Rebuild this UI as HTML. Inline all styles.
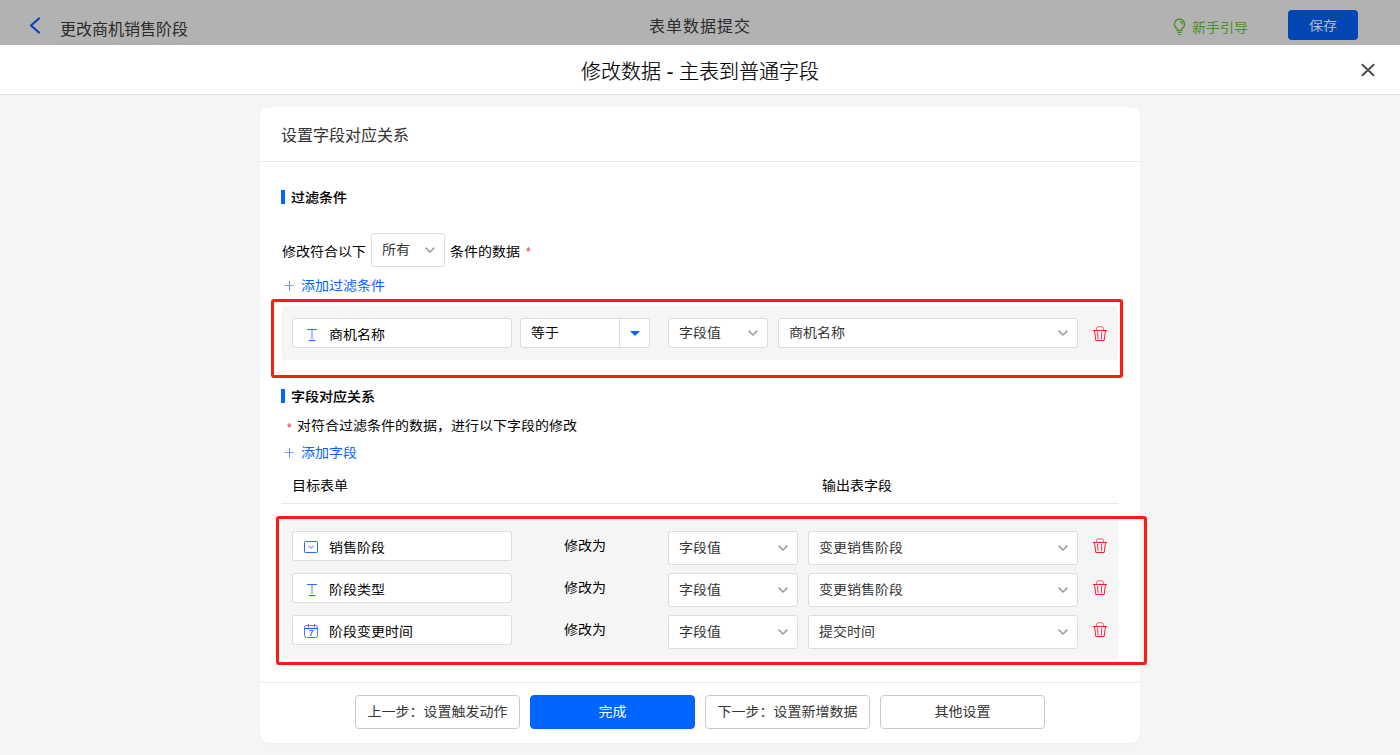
<!DOCTYPE html>
<html lang="zh-CN">
<head>
<meta charset="utf-8">
<title>修改数据 - 主表到普通字段</title>
<style>
*{box-sizing:border-box;margin:0;padding:0}
html,body{width:1400px;height:755px;overflow:hidden}
body{position:relative;background:#f5f5f5;font-family:"Liberation Sans","Noto Sans CJK SC",sans-serif;font-size:14px;color:#1f1f1f;line-height:20px}
.a{position:absolute;white-space:nowrap}
svg{position:absolute;display:block;overflow:visible}

/* top application bar (dimmed by modal mask) */
#topbar{left:0;top:0;width:1400px;height:45px;background:#b2b2b2}
#back{left:28.7px;top:17px;width:12px;height:17px}
#appname{left:60px;top:19px;font-size:16px;line-height:22px;color:#2a2a2a}
#appname-line{left:58px;top:43px;width:136px;height:0;border-top:1px dashed #a3a3a3}
#toptitle{left:649px;top:15px;font-size:16px;letter-spacing:1px;line-height:24px;color:#2c2c2c}
#guide-ico{left:1173px;top:18px;width:13px;height:18px}
#guide{left:1192px;top:17px;font-size:14px;line-height:20px;color:#45911a;transform:scaleY(.9)}
#save{left:1288px;top:10px;width:70px;height:30px;border-radius:4px;background:#0247b3;color:#bcbcbc;text-align:center;font-size:14px;line-height:30px}

/* dialog header */
#dlghead{left:0;top:45px;width:1400px;height:50px;background:#fff;border-bottom:1px solid #e0e0e0}
#dlgtitle{left:0;top:58px;width:1400px;text-align:center;font-size:20px;line-height:28px;color:#000;font-weight:300;-webkit-text-stroke:.2px #000}
#close{left:1360.5px;top:63px;width:14px;height:14px}

/* card */
#card{left:260px;top:107px;width:880px;height:636px;background:#fff;border-radius:9px;box-shadow:0 1px 3px rgba(0,0,0,.04)}
#cardtitle{left:281px;top:125px;font-size:16px;line-height:22px;color:#333}
.hr{height:1px;background:#e9e9e9}
.bar{width:4px;height:14px;background:#0265ff}
.sec{font-weight:500;font-size:14px;line-height:20px;color:#000;transform:scaleY(.91);-webkit-text-stroke:.12px #000}
.t{font-size:14px;line-height:20px;color:#000;transform:scaleY(.9);transform-origin:50% 40%}
.s{color:#333}
.blue{color:#0265ff}
.q{display:inline-block;transform:scaleY(.9)}
.red{color:#f5222d}
.grey{background:#f5f5f5;border-radius:3px}
.box{background:#fff;border:1px solid #dcdcdc;border-radius:3px}
.redbox{border:3px solid #fe1c10;border-radius:3px}
.btn{top:695px;width:165px;height:34px;border:1px solid #c9c9c9;border-radius:4px;background:#fff;text-align:center;font-size:14px;line-height:32px;color:#333}
.btn.primary{background:#0265ff;border-color:#0265ff;color:#fff}
</style>
</head>
<body>

<!-- top bar -->
<div class="a" id="topbar"></div>
<svg id="back" viewBox="0 0 12 17"><polyline points="10,1.5 2,8.5 10,15.5" fill="none" stroke="#0b41c2" stroke-width="2.3" stroke-linecap="round" stroke-linejoin="round"/></svg>
<div class="a" id="appname">更改商机销售阶段</div>
<div class="a" id="appname-line"></div>
<div class="a" id="toptitle">表单数据提交</div>
<svg id="guide-ico" viewBox="0 0 13 18"><path d="M6.5 1.2a5 5 0 0 0-3 9c.6.5.9 1.1.9 1.8v.5h4.2v-.5c0-.7.3-1.3.9-1.8a5 5 0 0 0-3-9z" fill="none" stroke="#45911a" stroke-width="1.3"/><path d="M4.4 14.5h4.2M5 16.5h3" fill="none" stroke="#45911a" stroke-width="1.2"/><path d="M7 3.4a3 3 0 0 1 2.5 2.9" fill="none" stroke="#45911a" stroke-width="1.1"/></svg>
<div class="a" id="guide">新手引导</div>
<div class="a" id="save"><span class="q">保存</span></div>

<!-- dialog header -->
<div class="a" id="dlghead"></div>
<div class="a" id="dlgtitle">修改数据 - 主表到普通字段</div>
<svg id="close" viewBox="0 0 14 14"><path d="M.9 1.3l12.2 11.4M13.1 1.3L.9 12.7" fill="none" stroke="#4a4a4a" stroke-width="1.9"/></svg>

<!-- card -->
<div class="a" id="card"></div>
<div class="a" id="cardtitle">设置字段对应关系</div>
<div class="a hr" style="left:260px;top:161px;width:880px"></div>

<!-- section 1: filter -->
<div class="a bar" style="left:281px;top:190px"></div>
<div class="a sec" style="left:291px;top:187px">过滤条件</div>
<div class="a t" style="left:282px;top:242px">修改符合以下</div>
<div class="a box" style="left:371px;top:233px;width:74px;height:34px"></div>
<div class="a t s" style="left:382px;top:240px">所有</div>
<svg style="left:425px;top:247px;width:10px;height:6px" viewBox="0 0 10 6"><polyline points="0.6,0.6 5,5 9.4,0.6" fill="none" stroke="#959ba6" stroke-width="1.5"/></svg>
<div class="a t" style="left:450px;top:242px">条件的数据</div>
<div class="a red" style="left:526px;top:242px;font-size:12px">*</div>
<svg style="left:284px;top:281px;width:10px;height:10px" viewBox="0 0 10 10"><path d="M5.5 0v9.5" fill="none" stroke="#3a6dff" stroke-width="1" stroke-opacity=".8"/><path d="M0 4.5h10" fill="none" stroke="#3a6dff" stroke-width="1" stroke-opacity=".6"/></svg>
<div class="a t blue" style="left:301px;top:276px">添加过滤条件</div>

<div class="a grey" style="left:282px;top:306px;width:836px;height:54px"></div>
<div class="a box" style="left:292px;top:318px;width:220px;height:30px"></div>
<svg style="left:307px;top:329px;width:10px;height:12px" viewBox="0 0 10 12"><path d="M0 .5h10" fill="none" stroke="#2f6bff" stroke-width="1"/><path d="M5 1v9" fill="none" stroke="#6a7dff" stroke-width="2" stroke-opacity=".55"/><path d="M2 11.5h6.3" fill="none" stroke="#0265ff" stroke-width="1"/></svg>
<div class="a t" style="left:329px;top:325px">商机名称</div>
<div class="a box" style="left:520px;top:318px;width:130px;height:30px;border-radius:2px"></div>
<div class="a" style="left:619px;top:319px;width:1px;height:28px;background:#dcdcdc"></div>
<div class="a t" style="left:531px;top:323px">等于</div>
<svg style="left:630px;top:331px;width:10px;height:5px" viewBox="0 0 10 5"><path d="M0 0h10L5 5z" fill="#0265ff"/></svg>
<div class="a box" style="left:668px;top:318px;width:100px;height:30px"></div>
<div class="a t s" style="left:679px;top:323px">字段值</div>
<svg style="left:748px;top:330px;width:10px;height:6px" viewBox="0 0 10 6"><polyline points="0.6,0.6 5,5 9.4,0.6" fill="none" stroke="#959ba6" stroke-width="1.5"/></svg>
<div class="a box" style="left:778px;top:318px;width:300px;height:30px"></div>
<div class="a t s" style="left:789px;top:323px">商机名称</div>
<svg style="left:1058px;top:330px;width:10px;height:6px" viewBox="0 0 10 6"><polyline points="0.6,0.6 5,5 9.4,0.6" fill="none" stroke="#959ba6" stroke-width="1.5"/></svg>
<svg style="left:1093px;top:326px;width:14px;height:15px" viewBox="0 0 14 15"><path d="M0 4.5h14" fill="none" stroke="#fa1e2d" stroke-width="1.1"/><path d="M3.6 4.3V2.3a1.5 1.5 0 0 1 1.5-1.5h3.8a1.5 1.5 0 0 1 1.5 1.5v2" fill="none" stroke="#fa3b47" stroke-width="1" stroke-opacity=".8"/><path d="M1.6 5l1.2 9.5h8.4l1.2-9.5" fill="none" stroke="#fa1e2d" stroke-width="1" stroke-linejoin="round"/><path d="M4.6 6.3l.4 6.4M8.7 6.3l-.3 6.4" fill="none" stroke="#fa1e2d" stroke-width="1" stroke-linecap="round" stroke-opacity=".9"/></svg>
<div class="a redbox" style="left:271px;top:299px;width:852px;height:79px"></div>


<!-- section 2: field mapping -->
<div class="a bar" style="left:281px;top:389px"></div>
<div class="a sec" style="left:291px;top:386px">字段对应关系</div>
<div class="a red" style="left:287px;top:418px;font-size:12px">*</div>
<div class="a t" style="left:297px;top:416px">对符合过滤条件的数据，进行以下字段的修改</div>
<svg style="left:284px;top:448px;width:10px;height:10px" viewBox="0 0 10 10"><path d="M5.5 0v9.5" fill="none" stroke="#3a6dff" stroke-width="1" stroke-opacity=".8"/><path d="M0 4.5h10" fill="none" stroke="#3a6dff" stroke-width="1" stroke-opacity=".6"/></svg>
<div class="a t blue" style="left:301px;top:443px">添加字段</div>
<div class="a t" style="left:292px;top:476px">目标表单</div>
<div class="a t" style="left:822px;top:476px">输出表字段</div>
<div class="a hr" style="left:282px;top:503px;width:836px"></div>
<div class="a grey" style="left:282px;top:519px;width:836px;height:140px"></div>
<div class="a box" style="left:292px;top:531px;width:220px;height:30px"></div>
<svg style="left:304px;top:541px;width:14px;height:12px" viewBox="0 0 14 12"><rect x=".5" y=".5" width="13" height="11" rx=".8" fill="none" stroke="#2a68ff" stroke-width="1"/><polyline points="4.2,4.8 7,7.3 9.8,4.8" fill="none" stroke="#3d6dff" stroke-width="1"/></svg>
<div class="a t" style="left:329px;top:538px">销售阶段</div>
<div class="a t" style="left:564px;top:536px">修改为</div>
<div class="a box" style="left:668px;top:531px;width:130px;height:34px"></div>
<div class="a t s" style="left:679px;top:538px">字段值</div>
<svg style="left:778px;top:545px;width:10px;height:6px" viewBox="0 0 10 6"><polyline points="0.6,0.6 5,5 9.4,0.6" fill="none" stroke="#959ba6" stroke-width="1.5"/></svg>
<div class="a box" style="left:808px;top:531px;width:270px;height:34px"></div>
<div class="a t s" style="left:819px;top:538px">变更销售阶段</div>
<svg style="left:1058px;top:545px;width:10px;height:6px" viewBox="0 0 10 6"><polyline points="0.6,0.6 5,5 9.4,0.6" fill="none" stroke="#959ba6" stroke-width="1.5"/></svg>
<svg style="left:1093px;top:538px;width:14px;height:15px" viewBox="0 0 14 15"><path d="M0 4.5h14" fill="none" stroke="#fa1e2d" stroke-width="1.1"/><path d="M3.6 4.3V2.3a1.5 1.5 0 0 1 1.5-1.5h3.8a1.5 1.5 0 0 1 1.5 1.5v2" fill="none" stroke="#fa3b47" stroke-width="1" stroke-opacity=".8"/><path d="M1.6 5l1.2 9.5h8.4l1.2-9.5" fill="none" stroke="#fa1e2d" stroke-width="1" stroke-linejoin="round"/><path d="M4.6 6.3l.4 6.4M8.7 6.3l-.3 6.4" fill="none" stroke="#fa1e2d" stroke-width="1" stroke-linecap="round" stroke-opacity=".9"/></svg>
<div class="a box" style="left:292px;top:573px;width:220px;height:30px"></div>
<svg style="left:307px;top:584px;width:10px;height:12px" viewBox="0 0 10 12"><path d="M0 .5h10" fill="none" stroke="#2f6bff" stroke-width="1"/><path d="M5 1v9" fill="none" stroke="#6a7dff" stroke-width="2" stroke-opacity=".55"/><path d="M2 11.5h6.3" fill="none" stroke="#0265ff" stroke-width="1"/></svg>
<div class="a t" style="left:329px;top:580px">阶段类型</div>
<div class="a t" style="left:564px;top:578px">修改为</div>
<div class="a box" style="left:668px;top:573px;width:130px;height:34px"></div>
<div class="a t s" style="left:679px;top:580px">字段值</div>
<svg style="left:778px;top:587px;width:10px;height:6px" viewBox="0 0 10 6"><polyline points="0.6,0.6 5,5 9.4,0.6" fill="none" stroke="#959ba6" stroke-width="1.5"/></svg>
<div class="a box" style="left:808px;top:573px;width:270px;height:34px"></div>
<div class="a t s" style="left:819px;top:580px">变更销售阶段</div>
<svg style="left:1058px;top:587px;width:10px;height:6px" viewBox="0 0 10 6"><polyline points="0.6,0.6 5,5 9.4,0.6" fill="none" stroke="#959ba6" stroke-width="1.5"/></svg>
<svg style="left:1093px;top:580px;width:14px;height:15px" viewBox="0 0 14 15"><path d="M0 4.5h14" fill="none" stroke="#fa1e2d" stroke-width="1.1"/><path d="M3.6 4.3V2.3a1.5 1.5 0 0 1 1.5-1.5h3.8a1.5 1.5 0 0 1 1.5 1.5v2" fill="none" stroke="#fa3b47" stroke-width="1" stroke-opacity=".8"/><path d="M1.6 5l1.2 9.5h8.4l1.2-9.5" fill="none" stroke="#fa1e2d" stroke-width="1" stroke-linejoin="round"/><path d="M4.6 6.3l.4 6.4M8.7 6.3l-.3 6.4" fill="none" stroke="#fa1e2d" stroke-width="1" stroke-linecap="round" stroke-opacity=".9"/></svg>
<div class="a box" style="left:292px;top:615px;width:220px;height:30px"></div>
<svg style="left:304px;top:624px;width:14px;height:14px" viewBox="0 0 14 14"><rect x=".5" y="1.5" width="13" height="12" rx="2" fill="none" stroke="#4a78ff" stroke-width="1"/><path d="M.5 4.5h13" fill="none" stroke="#0f62ff" stroke-width="1.2"/><path d="M4.5 0v3.5M10.5 0v3.5" fill="none" stroke="#4a78ff" stroke-width="1"/><text x="7.2" y="12" text-anchor="middle" font-family="Liberation Sans, sans-serif" font-size="8.5" fill="#0f62ff" stroke="#0f62ff" stroke-width=".2">7</text></svg>
<div class="a t" style="left:329px;top:622px">阶段变更时间</div>
<div class="a t" style="left:564px;top:620px">修改为</div>
<div class="a box" style="left:668px;top:615px;width:130px;height:34px"></div>
<div class="a t s" style="left:679px;top:622px">字段值</div>
<svg style="left:778px;top:629px;width:10px;height:6px" viewBox="0 0 10 6"><polyline points="0.6,0.6 5,5 9.4,0.6" fill="none" stroke="#959ba6" stroke-width="1.5"/></svg>
<div class="a box" style="left:808px;top:615px;width:270px;height:34px"></div>
<div class="a t s" style="left:819px;top:622px">提交时间</div>
<svg style="left:1058px;top:629px;width:10px;height:6px" viewBox="0 0 10 6"><polyline points="0.6,0.6 5,5 9.4,0.6" fill="none" stroke="#959ba6" stroke-width="1.5"/></svg>
<svg style="left:1093px;top:622px;width:14px;height:15px" viewBox="0 0 14 15"><path d="M0 4.5h14" fill="none" stroke="#fa1e2d" stroke-width="1.1"/><path d="M3.6 4.3V2.3a1.5 1.5 0 0 1 1.5-1.5h3.8a1.5 1.5 0 0 1 1.5 1.5v2" fill="none" stroke="#fa3b47" stroke-width="1" stroke-opacity=".8"/><path d="M1.6 5l1.2 9.5h8.4l1.2-9.5" fill="none" stroke="#fa1e2d" stroke-width="1" stroke-linejoin="round"/><path d="M4.6 6.3l.4 6.4M8.7 6.3l-.3 6.4" fill="none" stroke="#fa1e2d" stroke-width="1" stroke-linecap="round" stroke-opacity=".9"/></svg>
<div class="a redbox" style="left:276px;top:516px;width:871px;height:149px"></div>


<!-- footer -->
<div class="a hr" style="left:260px;top:682px;width:880px"></div>
<div class="a btn" style="left:355px"><span class="q">上一步：设置触发动作</span></div>
<div class="a btn primary" style="left:530px"><span class="q">完成</span></div>
<div class="a btn" style="left:705px"><span class="q">下一步：设置新增数据</span></div>
<div class="a btn" style="left:880px"><span class="q">其他设置</span></div>


</body>
</html>
